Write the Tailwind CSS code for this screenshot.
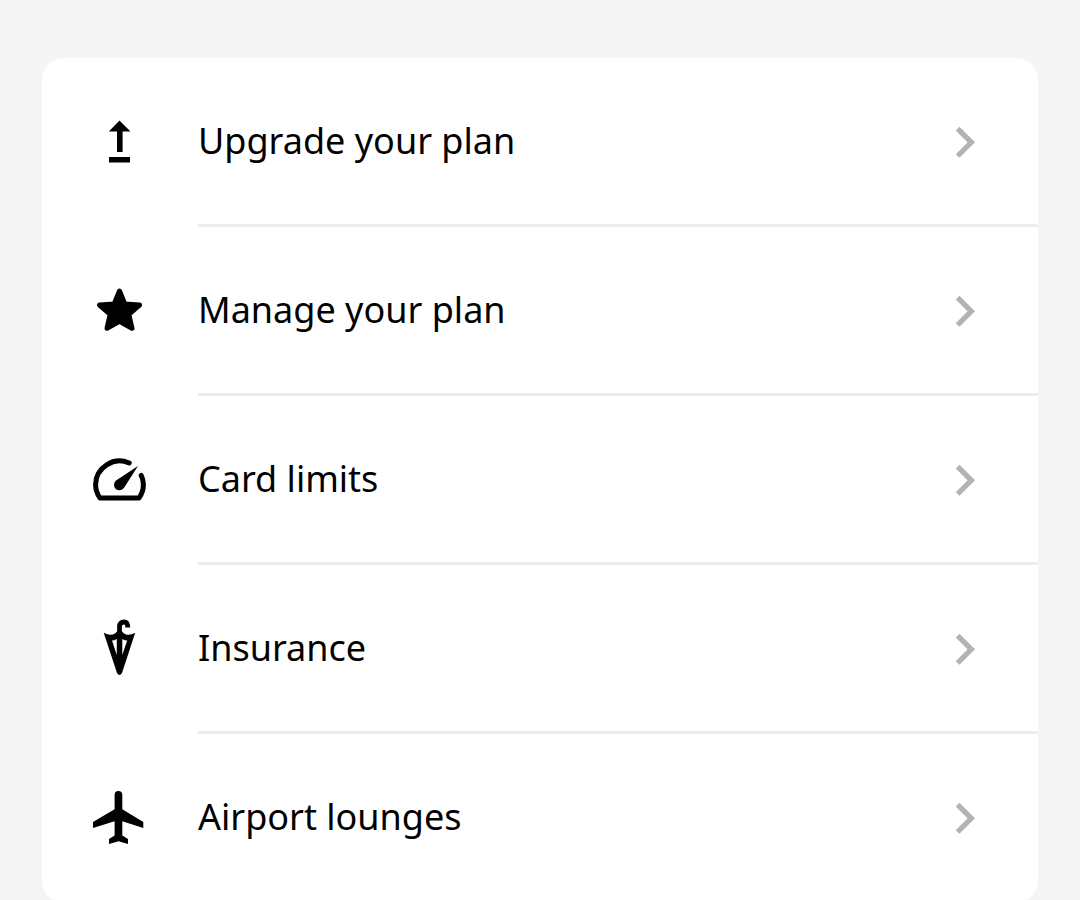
<!DOCTYPE html>
<html lang="en">
<head>
    <meta charset="UTF-8">
    <meta name="viewport" content="width=device-width, initial-scale=1.0">
    <title>Your plan</title>
    <script src="https://cdn.jsdelivr.net/npm/@tailwindcss/browser@4"></script>
</head>
<body class="bg-[#f5f5f5] text-black font-['Noto_Sans',sans-serif]">
    <main class="px-[42px] pt-[58px]">
        <nav aria-label="Plan" class="bg-white rounded-[22px] overflow-hidden">
            <ul>
                <li>
                    <a href="#upgrade" class="flex gap-12 pl-12">
                        <svg class="w-[60px] h-[60px] mt-[53px] mb-14 shrink-0" viewBox="0 0 60 60" aria-hidden="true">
                            <path d="M29.5 9.4L40.5 20.4H32.6V41H27V20.4H18.8Z M19 46H40V51.5H19Z"/>
                        </svg>
                        <span class="flex flex-1 items-center justify-between border-b-3 border-[#ececec] pr-[61px]">
                            <span class="text-[36px] leading-[48px]">Upgrade your plan</span>
                            <svg class="w-6 h-9 shrink-0" viewBox="0 0 24 36" fill="none" stroke="#b3b3b3" stroke-width="5.3" aria-hidden="true">
                                <path d="M4.6 5.6L18.3 19.3L4.6 33"/>
                            </svg>
                        </span>
                    </a>
                </li>
                <li>
                    <a href="#manage" class="flex gap-12 pl-12">
                        <svg class="w-[60px] h-[60px] mt-[53px] mb-14 shrink-0" viewBox="0 0 60 60" stroke="#000" stroke-width="5" stroke-linejoin="round" aria-hidden="true">
                            <path d="M29.5 11L34.8 24L49.5 25L38.8 34.4L42 48.2L29.5 41.2L17 48.2L20.2 34.4L9.5 25L24.2 24Z"/>
                        </svg>
                        <span class="flex flex-1 items-center justify-between border-b-3 border-[#ececec] pr-[61px]">
                            <span class="text-[36px] leading-[48px]">Manage your plan</span>
                            <svg class="w-6 h-9 shrink-0" viewBox="0 0 24 36" fill="none" stroke="#b3b3b3" stroke-width="5.3" aria-hidden="true">
                                <path d="M4.6 5.6L18.3 19.3L4.6 33"/>
                            </svg>
                        </span>
                    </a>
                </li>
                <li>
                    <a href="#limits" class="flex gap-12 pl-12">
                        <svg class="w-[60px] h-[60px] mt-[53px] mb-14 shrink-0" viewBox="0 0 60 60" aria-hidden="true">
                            <path d="M39.2 14A24 24 0 0 0 5.6 35.5Q5.6 43 10 49H49Q53.4 43 53.4 35.5Q53.4 30.5 51.2 26.4" fill="none" stroke="#000" stroke-width="5" stroke-linecap="round" stroke-linejoin="round"/>
                            <path d="M48 17L34.4 38.2C32.5 41.2 29 42 26.4 40.4C23.4 38.4 23.4 34 26 31.6Z"/>
                        </svg>
                        <span class="flex flex-1 items-center justify-between border-b-3 border-[#ececec] pr-[61px]">
                            <span class="text-[36px] leading-[48px]">Card limits</span>
                            <svg class="w-6 h-9 shrink-0" viewBox="0 0 24 36" fill="none" stroke="#b3b3b3" stroke-width="5.3" aria-hidden="true">
                                <path d="M4.6 5.6L18.3 19.3L4.6 33"/>
                            </svg>
                        </span>
                    </a>
                </li>
                <li>
                    <a href="#insurance" class="flex gap-12 pl-12">
                        <svg class="w-[60px] h-[60px] mt-[53px] mb-14 shrink-0" viewBox="0 0 60 60" aria-hidden="true">
                            <path d="M29.5 20V8.5Q29.5 4 34 4Q37.8 4 37.8 9.5" fill="none" stroke="#000" stroke-width="4.8"/>
                            <path fill-rule="evenodd" d="M13.7 14.7Q18.5 17.5 23 16.5Q25.5 15.5 27 13.5H32Q33.5 15.5 36 16.5Q40.5 17.5 45.2 14.7L32 55Q29.5 59 27 55Z M22 22.5L26.8 37V21Q24.5 22.5 22 22.5Z M37.2 22.5L32.3 37V21Q34.8 22.5 37.2 22.5Z"/>
                        </svg>
                        <span class="flex flex-1 items-center justify-between border-b-3 border-[#ececec] pr-[61px]">
                            <span class="text-[36px] leading-[48px]">Insurance</span>
                            <svg class="w-6 h-9 shrink-0" viewBox="0 0 24 36" fill="none" stroke="#b3b3b3" stroke-width="5.3" aria-hidden="true">
                                <path d="M4.6 5.6L18.3 19.3L4.6 33"/>
                            </svg>
                        </span>
                    </a>
                </li>
                <li>
                    <a href="#lounges" class="flex gap-12 pl-12">
                        <svg class="w-[60px] h-[60px] mt-[53px] mb-14 shrink-0" viewBox="0 0 60 60" aria-hidden="true">
                            <path d="M24.6 8A3.85 4 0 0 1 32.3 8V22.3L53.3 35V41L32.3 34.3V48.5L38 52V57L28.5 54.3L19 57V52L24.6 48.5V34.3L3 41V35L24.6 22.3Z"/>
                        </svg>
                        <span class="flex flex-1 items-center justify-between border-b-3 border-transparent pr-[61px]">
                            <span class="text-[36px] leading-[48px]">Airport lounges</span>
                            <svg class="w-6 h-9 shrink-0" viewBox="0 0 24 36" fill="none" stroke="#b3b3b3" stroke-width="5.3" aria-hidden="true">
                                <path d="M4.6 5.6L18.3 19.3L4.6 33"/>
                            </svg>
                        </span>
                    </a>
                </li>
            </ul>
        </nav>
    </main>
</body>
</html>
